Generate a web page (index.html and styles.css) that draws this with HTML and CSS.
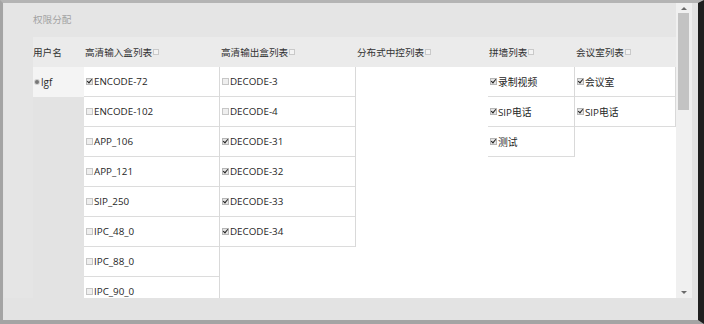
FILE: index.html
```html
<!DOCTYPE html>
<html>
<head>
<meta charset="utf-8">
<link rel="stylesheet" href="styles.css">
</head>
<body>
<div class="frame">
  <div class="panel">
    <div class="content">
      <div class="title">权限分配</div>
      <div class="table">
        <div class="th">用户名</div>
        <div class="th">高清输入盒列表<span class="hbox"></span></div>
        <div class="th">高清输出盒列表<span class="hbox"></span></div>
        <div class="th">分布式中控列表<span class="hbox"></span></div>
        <div class="th">拼墙列表<span class="hbox"></span></div>
        <div class="th">会议室列表<span class="hbox"></span></div>

        <div class="col col-user">
          <div class="user-row"><span class="radio"></span>lgf</div>
        </div>
        <div class="col">
          <ul class="list">
            <li class="item"><span class="cb on"></span>ENCODE-72</li>
            <li class="item"><span class="cb"></span>ENCODE-102</li>
            <li class="item"><span class="cb"></span>APP_106</li>
            <li class="item"><span class="cb"></span>APP_121</li>
            <li class="item"><span class="cb"></span>SIP_250</li>
            <li class="item"><span class="cb"></span>IPC_48_0</li>
            <li class="item"><span class="cb"></span>IPC_88_0</li>
            <li class="item"><span class="cb"></span>IPC_90_0</li>
          </ul>
        </div>
        <div class="col">
          <ul class="list">
            <li class="item"><span class="cb"></span>DECODE-3</li>
            <li class="item"><span class="cb"></span>DECODE-4</li>
            <li class="item"><span class="cb on"></span>DECODE-31</li>
            <li class="item"><span class="cb on"></span>DECODE-32</li>
            <li class="item"><span class="cb on"></span>DECODE-33</li>
            <li class="item"><span class="cb on"></span>DECODE-34</li>
          </ul>
        </div>
        <div class="col"></div>
        <div class="col">
          <ul class="list">
            <li class="item"><span class="cb on"></span>录制视频</li>
            <li class="item"><span class="cb on"></span>SIP电话</li>
            <li class="item"><span class="cb on"></span>测试</li>
          </ul>
        </div>
        <div class="col">
          <ul class="list">
            <li class="item"><span class="cb on"></span>会议室</li>
            <li class="item"><span class="cb on"></span>SIP电话</li>
          </ul>
        </div>
      </div>
    </div>
    <div class="scrollbar">
      <div class="sb-btn"><span class="arrow-up"></span></div>
      <div class="thumb"></div>
      <div class="sb-space"></div>
      <div class="sb-btn sb-btn-down"><span class="arrow-down"></span></div>
    </div>
  </div>
</div>
</body>
</html>
```

FILE: styles.css
```css
html, body {
  margin: 0;
  padding: 0;
  background: #ffffff;
}

body {
  font-family: "Open Sans", "Noto Sans CJK SC", sans-serif;
  color: #2a2a2a;
}

.frame {
  width: 704px;
  height: 324px;
  box-sizing: border-box;
  border-left: 3px solid #a4a4a4;
  border-top: 3px solid #b4b4b4;
  border-bottom: 4px solid #a4a4a4;
  border-right: 6px solid #1f1f1f;
  background: #e3e3e3;
  padding: 0 6px 0 1px;
}

.panel {
  display: flex;
  height: 295px;
}

.content {
  flex: 1;
  min-width: 0;
  display: flex;
  flex-direction: column;
  padding-left: 29px;
  background: #e5e5e5;
}

.title {
  height: 34px;
  box-sizing: border-box;
  padding-top: 10px;
  line-height: 14px;
  font-size: 9.6px;
  color: #a2a2a2;
}

.table {
  flex: 1;
  min-height: 0;
  display: grid;
  grid-template-columns: 51px 136px 136px 132px 87px 1fr;
  grid-template-rows: 30px 1fr;
  overflow: hidden;
}

.th {
  background: #ebebeb;
  display: flex;
  align-items: center;
  padding-left: 1px;
  font-size: 9.6px;
  color: #333333;
  white-space: nowrap;
}

.th:first-child {
  padding-left: 0;
}

.hbox {
  display: inline-block;
  width: 4px;
  height: 4px;
  border: 1px solid #c9c9c9;
  background: #f3f3f3;
  margin-left: 1px;
}

.col {
  background: #ffffff;
  min-height: 0;
}

.col-user {
  background: #e3e3e3;
}

.user-row {
  height: 30px;
  background: #f4f4f4;
  display: flex;
  align-items: center;
  font-size: 10px;
  color: #2a2a2a;
  padding-left: 1px;
}

.radio {
  width: 4px;
  height: 4px;
  border-radius: 50%;
  background: #777777;
  box-shadow: 0 0 0 1px #d0d0d0;
  margin: 0 2px 0 1px;
}

.list {
  list-style: none;
  margin: 0;
  padding: 0;
  border-right: 1px solid #d9d9d9;
}

.item {
  height: 29px;
  border-bottom: 1px solid #dcdcdc;
  display: flex;
  align-items: center;
  font-size: 9.8px;
  color: #262626;
  white-space: nowrap;
}

.cb {
  position: relative;
  width: 5px;
  height: 5px;
  border: 1px solid #c6c6c6;
  background: #efefef;
  margin: 0 1px 0 2px;
  flex: none;
}

.cb.on {
  border-color: #b5b5b5;
  background: #e4e4e4;
}

.cb.on::after {
  content: "";
  position: absolute;
  left: 1px;
  top: -1px;
  width: 2px;
  height: 4px;
  border-right: 1.4px solid #222222;
  border-bottom: 1.4px solid #222222;
  transform: rotate(40deg);
}

.scrollbar {
  width: 16px;
  background: #f0f0f0;
  display: flex;
  flex-direction: column;
}

.sb-btn {
  height: 10px;
  display: flex;
  align-items: center;
  justify-content: center;
}

.sb-btn-down {
  height: 12px;
}

.arrow-up {
  width: 0;
  height: 0;
  border-left: 3px solid transparent;
  border-right: 3px solid transparent;
  border-bottom: 3px solid #6a6a6a;
}

.arrow-down {
  width: 0;
  height: 0;
  border-left: 3px solid transparent;
  border-right: 3px solid transparent;
  border-top: 3px solid #6a6a6a;
}

.thumb {
  height: 97px;
  margin: 0 3px 0 2px;
  background: #c3c3c3;
}

.sb-space {
  flex: 1;
}
```
